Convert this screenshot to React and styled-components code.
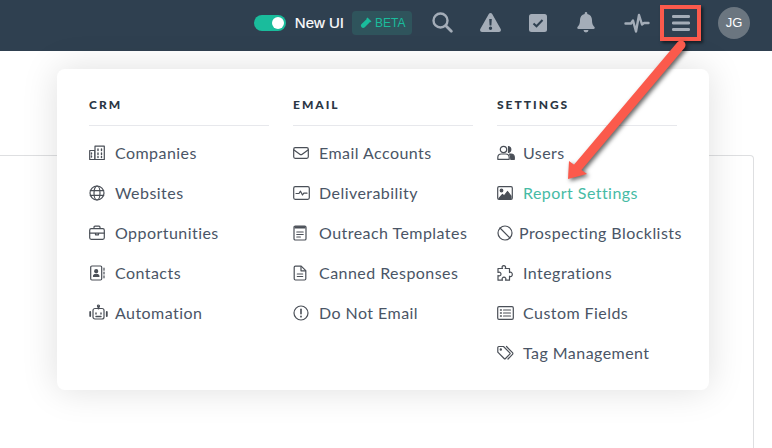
import React from 'react';
import styled, { createGlobalStyle } from 'styled-components';

const GlobalStyle = createGlobalStyle`
  html, body {
    margin: 0;
    padding: 0;
    background: #fff;
  }
  body {
    font-family: "Lato", "Open Sans", sans-serif;
    overflow: hidden;
  }
`;

const Page = styled.div`
  position: relative;
  width: 772px;
  height: 448px;
  overflow: hidden;
  background: #fff;
`;

const Header = styled.header`
  display: flex;
  justify-content: flex-end;
  align-items: center;
  height: 51px;
  padding: 0 22px 6px 0;
  box-sizing: border-box;
  background: #2f4050;
`;

const Toggle = styled.div`
  position: relative;
  width: 32px;
  height: 16px;
  border-radius: 8px;
  background: #1abc9c;
  margin-right: 9px;
  &::after {
    content: '';
    position: absolute;
    right: 2px;
    top: 2px;
    width: 12px;
    height: 12px;
    border-radius: 50%;
    background: #fff;
  }
`;

const ToggleLabel = styled.span`
  font-family: "Liberation Sans", Arial, sans-serif;
  font-size: 15px;
  color: #fff;
  margin-right: 8px;
  -webkit-text-stroke: 0.2px #fff;
`;

const BetaBadge = styled.div`
  display: flex;
  align-items: center;
  gap: 3px;
  width: 60px;
  height: 24px;
  padding-left: 8px;
  box-sizing: border-box;
  border-radius: 4px;
  background: #2f545c;
  color: #1abc9c;
  font-family: "Liberation Sans", Arial, sans-serif;
  font-size: 12px;
  margin-right: 6px;
`;

const NavSlot = styled.div`
  display: flex;
  justify-content: center;
  align-items: center;
  width: 48px;
  height: 36px;
  padding-left: ${(p) => p.$nudge || 0}px;
  box-sizing: border-box;
  color: #a4adb8;
`;

const MenuButton = styled.div`
  display: flex;
  justify-content: center;
  align-items: center;
  width: 41px;
  height: 36px;
  margin: 0 17px 0 2px;
  box-sizing: border-box;
  border: 4px solid #fb5a4c;
  box-shadow: 2px 2px 3px rgba(0, 0, 0, 0.55);
  color: #a4adb8;
`;

const Avatar = styled.div`
  display: flex;
  justify-content: center;
  align-items: center;
  width: 32px;
  height: 32px;
  border-radius: 50%;
  background: #6b7680;
  color: #fff;
  font-family: "Liberation Sans", Arial, sans-serif;
  font-size: 13px;
`;

const Content = styled.main`
  padding-top: 104px;
  padding-right: 18px;
`;

const Card = styled.section`
  height: 320px;
  border: 1px solid #dedfe1;
  border-left: none;
  border-bottom: none;
  border-radius: 0 4px 0 0;
`;

const Dropdown = styled.nav`
  position: absolute;
  left: 57px;
  top: 69px;
  width: 652px;
  height: 321px;
  box-sizing: border-box;
  display: grid;
  grid-template-columns: repeat(3, 180px);
  column-gap: 24px;
  padding: 27px 0 0 32px;
  background: #fff;
  border-radius: 8px;
  box-shadow: 0 0 36px rgba(0, 0, 0, 0.13);
`;

const ColumnTitle = styled.h3`
  margin: 0 0 6px;
  height: 21px;
  line-height: 17px;
  font-size: 12px;
  font-weight: 900;
  letter-spacing: 2px;
  color: #2b3644;
  border-bottom: 1px solid #e7e8ec;
  padding-bottom: 8px;
  box-sizing: content-box;
  text-transform: uppercase;
`;

const Item = styled.a`
  display: flex;
  align-items: center;
  height: 40px;
  white-space: nowrap;
  font-size: 16px;
  letter-spacing: 0.45px;
  color: ${(p) => (p.$active ? '#46bba5' : '#4a5566')};
`;

const ItemIcon = styled.span`
  display: flex;
  align-items: center;
  flex: none;
  width: ${(p) => (p.$tight ? '22px' : '26px')};
  padding-top: 1px;
  color: #4a4f57;
`;

const ArrowLayer = styled.svg`
  position: absolute;
  left: 0;
  top: 0;
  pointer-events: none;
  filter: drop-shadow(2px 2px 2px rgba(0, 0, 0, 0.6));
`;

const Line = ({ children, w = 18, h = 16, vb }) => (
  <svg width={w} height={h} viewBox={vb || `0 0 ${w} ${h}`} fill="none" stroke="currentColor" strokeWidth="1.2" strokeLinecap="round" strokeLinejoin="round">
    {children}
  </svg>
);

const icons = {
  companies: (
    <Line w={16}>
      <path d="M.7 14.500V5.500h5v9zM6 14.500V1.200h9.300v13.300z" />
      <path d="M2.500 8v1M2.500 11v1M9 4v1.500M12.500 4v1.500M9 8v1.500M12.500 8v1.500M9 11.500v1M12.500 11.500v1" strokeWidth="1.400" />
    </Line>
  ),
  websites: (
    <Line w={16}>
      <circle cx="8" cy="8" r="7" />
      <ellipse cx="8" cy="8" rx="3" ry="7" />
      <path d="M1.300 5.700h13.400M1.300 10.300h13.400" />
    </Line>
  ),
  opportunities: (
    <Line w={16}>
      <rect x=".7" y="3.700" width="14.600" height="10.600" rx="1.500" />
      <path d="M5 3.500V2.200c0-.6.400-1 1-1h4c.6 0 1 .4 1 1v1.300M.8 8.200h14.400M6.500 8.200v1.600h3V8.200" />
    </Line>
  ),
  contacts: (
    <Line w={16}>
      <rect x="1.700" y="1" width="11" height="14" rx="1.200" />
      <path d="M15 3.200v2M15 7v2M15 10.800v2" />
      <circle cx="7.200" cy="6.200" r="1.500" fill="currentColor" />
      <path d="M4.500 11.500c0-3 5.400-3 5.400 0z" fill="currentColor" />
    </Line>
  ),
  automation: (
    <Line w={19} h={17}>
      <rect x="4" y="4.500" width="11" height="10.500" rx="2" />
      <circle cx="9.500" cy="2" r="1" />
      <path d="M9.500 3v1.500M1.200 8v4M17.800 8v4" strokeWidth="1.800" />
      <path d="M7 9v1M12 9v1M7 12.500h5" strokeWidth="1.400" />
    </Line>
  ),
  email: (
    <Line w={16}>
      <rect x=".7" y="2.700" width="14.600" height="10.600" rx="1.500" />
      <path d="M1 5l5.800 4.300c.7.500 1.700.500 2.400 0L15 5" />
    </Line>
  ),
  deliverability: (
    <Line w={17}>
      <rect x=".7" y="1.700" width="15.600" height="12.600" rx="1.500" />
      <path d="M3 8.500h3l1.500-2.300L9.500 10l1.300-1.800H14" />
    </Line>
  ),
  templates: (
    <Line w={14}>
      <rect x="1" y="1" width="12" height="14" rx="1.300" />
      <path d="M1.500 2.300h11" strokeWidth="2.400" strokeLinecap="butt" />
      <path d="M3.800 7h6.400M3.800 9.500h6.400M3.800 12h3.600" />
    </Line>
  ),
  canned: (
    <Line w={14}>
      <path d="M1.200 2.300c0-.7.500-1.200 1.200-1.200h5.800l4.600 4.600v8.100c0 .700-.5 1.200-1.200 1.200H2.400c-.7 0-1.200-.5-1.200-1.200z" />
      <path d="M8 1.500v4.300h4.500" />
      <path d="M4.300 9h5.400M4.300 11.500h5.400" />
    </Line>
  ),
  donotemail: (
    <Line w={16}>
      <circle cx="8" cy="8" r="7" />
      <path d="M8 4.200v4.500" strokeWidth="1.600" />
      <path d="M8 11.300v.4" strokeWidth="1.700" />
    </Line>
  ),
  users: (
    <Line w={18}>
      <circle cx="6.500" cy="4.500" r="3.200" />
      <path d="M.8 14.300v-1.800c0-2 1.500-3.500 3.500-3.500h4.400c2 0 3.500 1.500 3.500 3.500v1.800z" />
      <path d="M11.500 1.500a3.100 3.100 0 0 1 0 6z" fill="currentColor" />
      <path d="M12.500 9h1.500c2 0 3.300 1.400 3.300 3.300v2h-3.500c0-2.100-.2-3.900-1.300-5.300z" fill="currentColor" />
    </Line>
  ),
  report: (
    <Line w={16}>
      <rect x=".7" y="1.700" width="14.600" height="12.600" rx="1.300" />
      <circle cx="4.500" cy="5.500" r="1.300" fill="currentColor" />
      <path d="M2 13.500l3.500-4 1.500 1.500 3.500-4.500 3.500 4.500v2.500z" fill="currentColor" />
    </Line>
  ),
  blocklists: (
    <Line w={16}>
      <circle cx="8" cy="8" r="7" />
      <path d="M3 3l10 10" />
    </Line>
  ),
  integrations: (
    <Line w={16}>
      <path d="M5.500 3.500H1v4c1.800-1 3 .200 3 1.500S2.800 11.500 1 10.500v4.700h4.500c-1-1.800.300-3 1.500-3s2.500 1.200 1.500 3h4v-4c1.800 1 2.800-.300 2.800-1.700S14.300 6.500 12.500 7.500v-4H8.200c1-1.800-.2-2.800-1.400-2.800s-2.300 1-1.300 2.800z" />
    </Line>
  ),
  fields: (
    <Line w={17}>
      <rect x=".7" y="1.700" width="15.600" height="12.600" rx="1.300" />
      <path d="M3.500 5h.8M3.500 8h.8M3.500 11h.8" strokeWidth="1.500" />
      <path d="M6.500 5h7M6.500 8h7M6.500 11h7" />
    </Line>
  ),
  tags: (
    <Line w={17}>
      <path d="M.8 2.500c0-.6.400-1 1-1h4.700l6.300 6.300c.4.400.4 1 0 1.400l-4.300 4.300c-.4.400-1 .4-1.400 0L.8 7.200z" />
      <path d="M9.500 1.500l6 6.100c.5.500.5 1.200 0 1.700l-4.500 4.700" />
      <circle cx="3.800" cy="4.500" r=".6" fill="currentColor" />
    </Line>
  ),
};

const columns = [
  {
    title: 'CRM',
    items: [
      { label: 'Companies', icon: 'companies' },
      { label: 'Websites', icon: 'websites' },
      { label: 'Opportunities', icon: 'opportunities' },
      { label: 'Contacts', icon: 'contacts' },
      { label: 'Automation', icon: 'automation' },
    ],
  },
  {
    title: 'Email',
    items: [
      { label: 'Email Accounts', icon: 'email' },
      { label: 'Deliverability', icon: 'deliverability' },
      { label: 'Outreach Templates', icon: 'templates' },
      { label: 'Canned Responses', icon: 'canned' },
      { label: 'Do Not Email', icon: 'donotemail' },
    ],
  },
  {
    title: 'Settings',
    items: [
      { label: 'Users', icon: 'users' },
      { label: 'Report Settings', icon: 'report', active: true },
      { label: 'Prospecting Blocklists', icon: 'blocklists', tight: true },
      { label: 'Integrations', icon: 'integrations' },
      { label: 'Custom Fields', icon: 'fields' },
      { label: 'Tag Management', icon: 'tags' },
    ],
  },
];

const App = () => (
  <Page>
    <GlobalStyle />
    <Header>
      <Toggle />
      <ToggleLabel>New UI</ToggleLabel>
      <BetaBadge>
        <svg width="12" height="12" viewBox="0 0 12 12" fill="currentColor">
          <path d="M7.500.5l4 4-1 .8-.5-.4L4.500 10.500a2.300 2.300 0 0 1-3.200-3.200L6.800 2l-.4-.5z" />
        </svg>
        BETA
      </BetaBadge>
      <NavSlot>
        <svg width="21" height="21" viewBox="0 0 21 21" fill="none" stroke="currentColor" strokeWidth="2.400" strokeLinecap="round">
          <circle cx="8.500" cy="8.500" r="7" />
          <path d="M13.800 13.800l5.500 5.500" strokeWidth="2.800" />
        </svg>
      </NavSlot>
      <NavSlot>
        <svg width="21" height="19" viewBox="0 0 21 19" fill="currentColor">
          <path fillRule="evenodd" d="M10.500 0c.7 0 1.300.4 1.700 1l8.500 15c.7 1.300-.2 3-1.700 3H2c-1.500 0-2.400-1.700-1.700-3l8.500-15c.4-.6 1-1 1.700-1zM9.200 6l.4 6.500h1.800l.4-6.500zM10.500 13.600a1.700 1.700 0 1 0 0 3.400 1.700 1.700 0 0 0 0-3.400z" />
        </svg>
      </NavSlot>
      <NavSlot>
        <svg width="18" height="18" viewBox="0 0 18 18">
          <rect width="18" height="18" rx="2.500" fill="currentColor" />
          <path d="M4.500 9.500l3 2.800 6-6.300" fill="none" stroke="#2f4050" strokeWidth="2" />
        </svg>
      </NavSlot>
      <NavSlot>
        <svg width="18" height="21" viewBox="0 0 18 21" fill="currentColor">
          <path d="M9 0c.8 0 1.300.6 1.300 1.400v.7c3 .6 4.700 3 4.700 6 0 4.500 1.300 5.600 2.500 7 .5.600.2 1.900-.9 1.900H1.400c-1.100 0-1.400-1.300-.9-1.900C1.700 13.700 3 12.600 3 8.100c0-3 1.700-5.400 4.700-6v-.7C7.700.6 8.200 0 9 0zM6.500 18h5a2.500 2.500 0 0 1-5 0z" />
        </svg>
      </NavSlot>
      <NavSlot $nudge={6}>
        <svg width="26" height="20" viewBox="0 0 26 20" fill="none" stroke="currentColor" strokeWidth="2.400" strokeLinecap="round" strokeLinejoin="round">
          <path d="M1.500 10.500H7l2-3 3 11L15 2l3 9.500 2-1.500h4.500" />
        </svg>
      </NavSlot>
      <MenuButton>
        <svg width="18" height="16" viewBox="0 0 18 16" fill="currentColor">
          <rect y="0" width="18" height="3" rx="1.200" />
          <rect y="6.500" width="18" height="3" rx="1.200" />
          <rect y="13" width="18" height="3" rx="1.200" />
        </svg>
      </MenuButton>
      <Avatar>JG</Avatar>
    </Header>
    <Content>
      <Card />
    </Content>
    <Dropdown>
      {columns.map((col) => (
        <div key={col.title}>
          <ColumnTitle>{col.title}</ColumnTitle>
          {col.items.map((item) => (
            <Item key={item.label} $active={item.active}>
              <ItemIcon $tight={item.tight}>{icons[item.icon]}</ItemIcon>
              {item.label}
            </Item>
          ))}
        </div>
      ))}
    </Dropdown>
    <ArrowLayer width="772" height="448" viewBox="0 0 772 448">
      <path d="M681 45L578 167" stroke="#fb5a4c" strokeWidth="9" strokeLinecap="round" fill="none" />
      <path d="M568 179l1-18 18 13z" fill="#fb5a4c" />
    </ArrowLayer>
  </Page>
);

export default App;
